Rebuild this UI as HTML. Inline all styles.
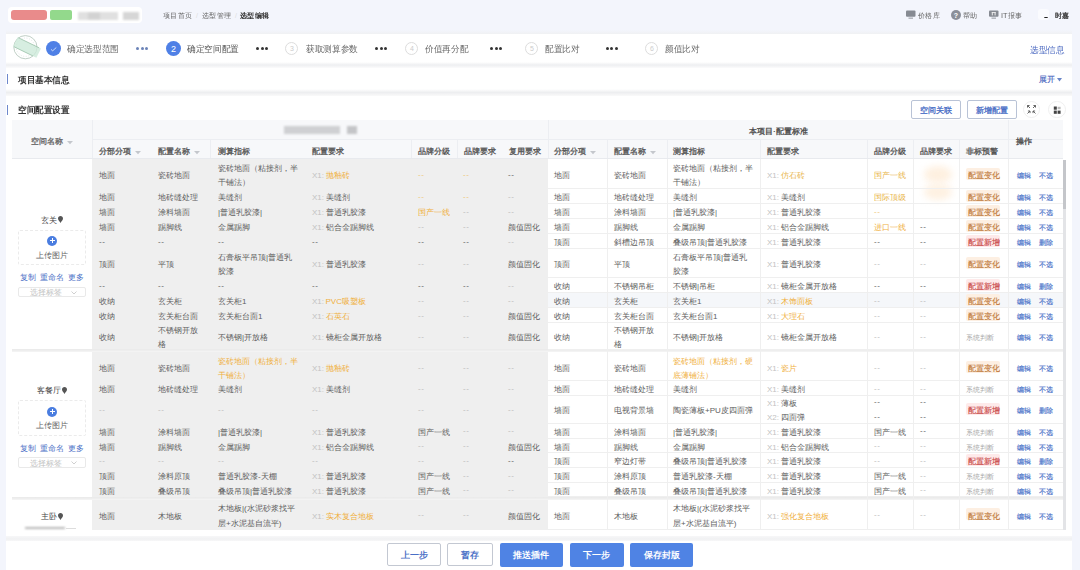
<!DOCTYPE html><html><head><meta charset="utf-8"><style>html,body{margin:0;padding:0}
body{width:1080px;height:570px;overflow:hidden;position:relative;background:#f3f5fc;font-family:"Liberation Sans", sans-serif;}
.t{position:absolute;height:20px;line-height:20px;white-space:nowrap}
.ml{position:absolute;white-space:normal}
</style></head><body><div style="position:absolute;left:8px;top:7px;width:134px;height:16px;background:#fff;border-radius:4px"></div><div style="position:absolute;left:11px;top:10px;width:36px;height:9.5px;background:#e98b8b;border-radius:3px;filter:blur(0.6px)"></div><div style="position:absolute;left:50px;top:10px;width:22px;height:9.5px;background:#93d98c;border-radius:2px;filter:blur(0.6px)"></div><div style="position:absolute;left:78px;top:11.5px;width:40px;height:8px;background:#e0e0e0;filter:blur(1.2px)"></div><div style="position:absolute;left:88px;top:13px;width:12px;height:6px;background:#d2d2d2;filter:blur(1px)"></div><div style="position:absolute;left:122.5px;top:11.5px;width:16px;height:8px;background:#d6d6d6;filter:blur(1.2px)"></div><div class="t" style="left:163px;top:6px;font-size:8px;color:#666;font-weight:normal;transform:scale(0.92);transform-origin:0 50%">项目首页</div><div class="t" style="left:196px;top:6px;font-size:7px;color:#ddd;font-weight:normal;">/</div><div class="t" style="left:202px;top:6px;font-size:8px;color:#666;font-weight:normal;transform:scale(0.92);transform-origin:0 50%">选型管理</div><div class="t" style="left:235px;top:6px;font-size:7px;color:#ddd;font-weight:normal;">/</div><div class="t" style="left:240px;top:6px;font-size:8px;color:#333;font-weight:bold;transform:scale(0.92);transform-origin:0 50%">选型编辑</div><svg style="position:absolute;left:906px;top:10px" width="10" height="10" viewBox="0 0 10 10"><rect x="0" y="0.6" width="9.5" height="6.2" rx="1" fill="#868a92"/><rect x="2.5" y="7.6" width="4.5" height="1.1" fill="#9a9ea6"/></svg><div class="t" style="left:917.5px;top:6px;font-size:8px;color:#666;font-weight:normal;transform:scale(0.92);transform-origin:0 50%">价格库</div><svg style="position:absolute;left:951px;top:10.3px" width="10" height="10" viewBox="0 0 10 10"><circle cx="5" cy="5" r="5" fill="#8a8f99"/><text x="5" y="8" font-size="7" text-anchor="middle" fill="#fff" font-family="Liberation Sans" font-weight="bold">?</text></svg><div class="t" style="left:963px;top:6px;font-size:8px;color:#666;font-weight:normal;transform:scale(0.92);transform-origin:0 50%">帮助</div><svg style="position:absolute;left:989px;top:10px" width="10" height="10" viewBox="0 0 10 10"><rect x="0" y="0.6" width="9.5" height="6.2" rx="1" fill="#868a92"/><rect x="2.8" y="2" width="1" height="3.4" fill="#eee"/><rect x="5.6" y="2" width="1" height="3.4" fill="#eee"/><rect x="2.8" y="2" width="3.8" height="0.9" fill="#eee"/><rect x="2.5" y="7.6" width="4.5" height="1.1" fill="#9a9ea6"/></svg><div class="t" style="left:1001px;top:6px;font-size:8px;color:#666;font-weight:normal;transform:scale(0.92);transform-origin:0 50%">IT报事</div><div style="position:absolute;left:1038px;top:9px;width:10.5px;height:10.5px;background:#fafbfe;border-radius:3px"></div><div style="position:absolute;left:1043.5px;top:16.6px;width:4px;height:1.6px;background:#222;border-radius:50%;filter:blur(0.3px)"></div><div class="t" style="left:1055px;top:6px;font-size:8px;color:#333;font-weight:normal;-webkit-text-stroke:0.3px #333;transform:scale(0.92);transform-origin:0 50%">时嘉</div><div style="position:absolute;left:6px;top:29.5px;width:1066px;height:4px;background:linear-gradient(rgba(238,239,242,0),#f0f1f3)"></div><div style="position:absolute;left:6px;top:33.5px;width:1066px;height:29px;background:#fff"></div><svg style="position:absolute;left:8px;top:33px;filter:blur(0.35px)" width="36" height="30" viewBox="0 0 36 30">
<circle cx="17.4" cy="14.2" r="11.6" fill="none" stroke="#b9c9bf" stroke-width="0.9"/>
<circle cx="17.4" cy="14.2" r="9.2" fill="none" stroke="#cdd9d1" stroke-width="0.6" stroke-dasharray="1 1.6"/>
<g transform="translate(19 14.5) rotate(26)">
<rect x="-13" y="-5.2" width="26" height="10.4" fill="#cdeada" opacity="0.8"/>
<line x1="-12" y1="-5" x2="11" y2="-5" stroke="#8fb89e" stroke-width="0.6"/>
<line x1="-12" y1="5" x2="9" y2="5" stroke="#8fb89e" stroke-width="0.6"/>
</g>
</svg><div style="position:absolute;left:45.9px;top:40.8px;width:14.8px;height:14.8px;background:#4f80e6;border-radius:50%"></div><svg style="position:absolute;left:45.9px;top:40.8px" width="14.8" height="14.8" viewBox="0 0 14.8 14.8"><path d="M5 8.4 L6.7 9.8 L10.3 6.5" fill="none" stroke="#d8e4fb" stroke-width="0.9"/></svg><div class="t" style="left:67px;top:38.5px;font-size:9px;color:#666;font-weight:normal;transform:scaleX(0.96);transform-origin:0 50%">确定选型范围</div><div style="position:absolute;left:136.0px;top:46.5px;width:3.2px;height:3.2px;background:#6b83b8;border-radius:50%"></div><div style="position:absolute;left:140.6px;top:46.5px;width:3.2px;height:3.2px;background:#6b83b8;border-radius:50%"></div><div style="position:absolute;left:145.2px;top:46.5px;width:3.2px;height:3.2px;background:#6b83b8;border-radius:50%"></div><div style="position:absolute;left:165.8px;top:40.7px;width:15px;height:15px;background:#4f80e6;border-radius:50%"></div><div class="t" style="left:166px;top:38.5px;width:15px;text-align:center;font-size:9px;color:#fff">2</div><div class="t" style="left:186.5px;top:38.5px;font-size:9px;color:#555;font-weight:normal;transform:scaleX(0.96);transform-origin:0 50%">确定空间配置</div><div style="position:absolute;left:256.0px;top:46.5px;width:3.2px;height:3.2px;background:#333;border-radius:50%"></div><div style="position:absolute;left:260.6px;top:46.5px;width:3.2px;height:3.2px;background:#333;border-radius:50%"></div><div style="position:absolute;left:265.2px;top:46.5px;width:3.2px;height:3.2px;background:#333;border-radius:50%"></div><div style="position:absolute;left:285px;top:41.5px;width:13px;height:13px;border:1px solid #ddd;border-radius:50%;box-sizing:border-box"></div><div class="t" style="left:285px;top:38.5px;width:14px;text-align:center;font-size:7px;color:#ccc">3</div><div class="t" style="left:306px;top:38.5px;font-size:9px;color:#666;font-weight:normal;transform:scaleX(0.96);transform-origin:0 50%">获取测算参数</div><div style="position:absolute;left:375.0px;top:46.5px;width:3.2px;height:3.2px;background:#333;border-radius:50%"></div><div style="position:absolute;left:379.6px;top:46.5px;width:3.2px;height:3.2px;background:#333;border-radius:50%"></div><div style="position:absolute;left:384.2px;top:46.5px;width:3.2px;height:3.2px;background:#333;border-radius:50%"></div><div style="position:absolute;left:405px;top:41.5px;width:13px;height:13px;border:1px solid #ddd;border-radius:50%;box-sizing:border-box"></div><div class="t" style="left:405px;top:38.5px;width:14px;text-align:center;font-size:7px;color:#ccc">4</div><div class="t" style="left:425px;top:38.5px;font-size:9px;color:#666;font-weight:normal;transform:scaleX(0.96);transform-origin:0 50%">价值再分配</div><div style="position:absolute;left:490.0px;top:46.5px;width:3.2px;height:3.2px;background:#333;border-radius:50%"></div><div style="position:absolute;left:494.6px;top:46.5px;width:3.2px;height:3.2px;background:#333;border-radius:50%"></div><div style="position:absolute;left:499.2px;top:46.5px;width:3.2px;height:3.2px;background:#333;border-radius:50%"></div><div style="position:absolute;left:525px;top:41.5px;width:13px;height:13px;border:1px solid #ddd;border-radius:50%;box-sizing:border-box"></div><div class="t" style="left:525px;top:38.5px;width:14px;text-align:center;font-size:7px;color:#ccc">5</div><div class="t" style="left:545px;top:38.5px;font-size:9px;color:#666;font-weight:normal;transform:scaleX(0.96);transform-origin:0 50%">配置比对</div><div style="position:absolute;left:605.5px;top:46.5px;width:3.2px;height:3.2px;background:#333;border-radius:50%"></div><div style="position:absolute;left:610.1px;top:46.5px;width:3.2px;height:3.2px;background:#333;border-radius:50%"></div><div style="position:absolute;left:614.7px;top:46.5px;width:3.2px;height:3.2px;background:#333;border-radius:50%"></div><div style="position:absolute;left:645px;top:41.5px;width:13px;height:13px;border:1px solid #ddd;border-radius:50%;box-sizing:border-box"></div><div class="t" style="left:645px;top:38.5px;width:14px;text-align:center;font-size:7px;color:#ccc">6</div><div class="t" style="left:665px;top:38.5px;font-size:9px;color:#666;font-weight:normal;transform:scaleX(0.96);transform-origin:0 50%">颜值比对</div><div class="t" style="left:1030px;top:39.5px;font-size:9px;color:#4a68c0;font-weight:normal;transform:scaleX(0.955);transform-origin:0 50%">选型信息</div><div style="position:absolute;left:6px;top:62px;width:1066px;height:6px;background:linear-gradient(#fff,#eeeff1 50%,#fbfbfc)"></div><div style="position:absolute;left:6px;top:67.5px;width:1066px;height:21.5px;background:#fff"></div><div style="position:absolute;left:6px;top:88.5px;width:1066px;height:7px;background:linear-gradient(#fff,#edeef0 50%,#fafafa)"></div><div style="position:absolute;left:7px;top:73.5px;width:1.4px;height:10.5px;background:#6d87cc"></div><div class="t" style="left:18px;top:69.5px;font-size:9px;color:#333;font-weight:bold;transform:scaleX(0.955);transform-origin:0 50%">项目基本信息</div><div class="t" style="left:1039px;top:69.5px;font-size:8px;color:#4a68c0;font-weight:normal;-webkit-text-stroke:0.15px #4a68c0">展开</div><svg style="position:absolute;left:1057px;top:77.5px" width="5" height="4" viewBox="0 0 5 4"><path d="M0 0 L5 0 L2.5 3.5 Z" fill="#6a86c8"/></svg><div style="position:absolute;left:6px;top:95.5px;width:1066px;height:441px;background:#fff"></div><div style="position:absolute;left:7px;top:104.5px;width:1.4px;height:10px;background:#6d87cc"></div><div class="t" style="left:18px;top:100px;font-size:9px;color:#333;font-weight:bold;transform:scaleX(0.955);transform-origin:0 50%">空间配置设置</div><div style="position:absolute;left:911px;top:100px;width:50px;height:18.5px;border:1px solid #b9c3d6;border-radius:2px;box-sizing:border-box;background:#fff"></div><div class="t" style="left:911px;top:100.55px;width:50px;text-align:center;font-size:8px;color:#4a6fc6;-webkit-text-stroke:0.3px #4a6fc6">空间关联</div><div style="position:absolute;left:967px;top:100px;width:49.5px;height:18.5px;border:1px solid #b9c3d6;border-radius:2px;box-sizing:border-box;background:#fff"></div><div class="t" style="left:967px;top:100.55px;width:49.5px;text-align:center;font-size:8px;color:#4a6fc6;-webkit-text-stroke:0.3px #4a6fc6">新增配置</div><div style="position:absolute;left:1022.8px;top:100.6px;width:17.4px;height:17.4px;border-radius:50%;border:1px solid #f0f0f0;box-sizing:border-box"></div><svg style="position:absolute;left:1026px;top:104px" width="11" height="11" viewBox="0 0 11 11" fill="none" stroke="#555" stroke-width="0.9"><path d="M1.5 1.5 L4 4 M1.5 3.6 V1.5 H3.6 M9.5 1.5 L7 4 M7.4 1.5 H9.5 V3.6 M1.5 9.5 L4 7 M1.9 7 H4 V9.1 M9.5 9.5 L7 7 M7 9.1 V7 H9.1"/></svg><div style="position:absolute;left:1048.3px;top:100.6px;width:17.4px;height:17.4px;border-radius:50%;border:1px solid #f0f0f0;box-sizing:border-box"></div><svg style="position:absolute;left:1052.5px;top:105.5px" width="9" height="9" viewBox="0 0 9 9"><rect x="0.8" y="0.5" width="3" height="3.2" fill="#444"/><rect x="4.6" y="0.8" width="3" height="2.4" fill="#bbb"/><rect x="0.8" y="4.6" width="3" height="3.2" fill="#444"/><rect x="4.6" y="4.6" width="3" height="3.2" fill="#444"/></svg><div style="position:absolute;left:12px;top:120px;width:1051px;height:39px;background:#f7f8fa"></div><div style="position:absolute;left:92px;top:120px;width:1px;height:39px;background:#eceef2"></div><div style="position:absolute;left:92px;top:139px;width:971px;height:1px;background:#eceef2"></div><div style="position:absolute;left:548px;top:120px;width:1px;height:39px;background:#eceef2"></div><div style="position:absolute;left:1008px;top:120px;width:1px;height:39px;background:#eceef2"></div><div style="position:absolute;left:210px;top:139px;width:1px;height:20px;background:#eceef2"></div><div style="position:absolute;left:411px;top:139px;width:1px;height:20px;background:#eceef2"></div><div style="position:absolute;left:457px;top:139px;width:1px;height:20px;background:#eceef2"></div><div style="position:absolute;left:607px;top:139px;width:1px;height:20px;background:#eceef2"></div><div style="position:absolute;left:667px;top:139px;width:1px;height:20px;background:#eceef2"></div><div style="position:absolute;left:760px;top:139px;width:1px;height:20px;background:#eceef2"></div><div style="position:absolute;left:867px;top:139px;width:1px;height:20px;background:#eceef2"></div><div style="position:absolute;left:913px;top:139px;width:1px;height:20px;background:#eceef2"></div><div style="position:absolute;left:959px;top:139px;width:1px;height:20px;background:#eceef2"></div><div style="position:absolute;left:12px;top:158px;width:1051px;height:1px;background:#e8eaee"></div><div class="t" style="left:31px;top:132px;font-size:8px;color:#666;font-weight:normal;-webkit-text-stroke:0.3px #666;">空间名称</div><svg style="position:absolute;left:67px;top:141px" width="6" height="4" viewBox="0 0 6 4"><path d="M0 0 L6 0 L3 3.2 Z" fill="#c4c7cc"/></svg><div style="position:absolute;left:284px;top:126px;width:56px;height:8px;background:#cfd0d3;filter:blur(1.3px)"></div><div style="position:absolute;left:347px;top:126px;width:10px;height:8px;background:#c4c5c8;filter:blur(1.3px)"></div><div class="t" style="left:749px;top:122.4px;font-size:7.6px;color:#4a4a4a;font-weight:normal;-webkit-text-stroke:0.3px #4a4a4a;">本项目·配置标准</div><div class="t" style="left:1015.5px;top:132.2px;font-size:8px;color:#4a4a4a;font-weight:normal;-webkit-text-stroke:0.3px #4a4a4a;">操作</div><div class="t" style="left:99px;top:142px;font-size:8px;color:#555;font-weight:normal;-webkit-text-stroke:0.3px #555;">分部分项</div><svg style="position:absolute;left:135px;top:151px" width="6" height="4" viewBox="0 0 6 4"><path d="M0 0 L6 0 L3 3.2 Z" fill="#c4c7cc"/></svg><div class="t" style="left:158px;top:142px;font-size:8px;color:#555;font-weight:normal;-webkit-text-stroke:0.3px #555;">配置名称</div><svg style="position:absolute;left:194px;top:151px" width="6" height="4" viewBox="0 0 6 4"><path d="M0 0 L6 0 L3 3.2 Z" fill="#c4c7cc"/></svg><div class="t" style="left:218px;top:142px;font-size:8px;color:#555;font-weight:normal;-webkit-text-stroke:0.3px #555;">测算指标</div><div class="t" style="left:312px;top:142px;font-size:8px;color:#555;font-weight:normal;-webkit-text-stroke:0.3px #555;">配置要求</div><div class="t" style="left:418px;top:142px;font-size:8px;color:#555;font-weight:normal;-webkit-text-stroke:0.3px #555;">品牌分级</div><div class="t" style="left:464px;top:142px;font-size:8px;color:#555;font-weight:normal;-webkit-text-stroke:0.3px #555;">品牌要求</div><div class="t" style="left:509px;top:142px;font-size:8px;color:#555;font-weight:normal;-webkit-text-stroke:0.3px #555;">复用要求</div><div class="t" style="left:554px;top:142px;font-size:8px;color:#555;font-weight:normal;-webkit-text-stroke:0.3px #555;">分部分项</div><svg style="position:absolute;left:590px;top:151px" width="6" height="4" viewBox="0 0 6 4"><path d="M0 0 L6 0 L3 3.2 Z" fill="#c4c7cc"/></svg><div class="t" style="left:613.5px;top:142px;font-size:8px;color:#555;font-weight:normal;-webkit-text-stroke:0.3px #555;">配置名称</div><svg style="position:absolute;left:649.5px;top:151px" width="6" height="4" viewBox="0 0 6 4"><path d="M0 0 L6 0 L3 3.2 Z" fill="#c4c7cc"/></svg><div class="t" style="left:673px;top:142px;font-size:8px;color:#555;font-weight:normal;-webkit-text-stroke:0.3px #555;">测算指标</div><div class="t" style="left:767px;top:142px;font-size:8px;color:#555;font-weight:normal;-webkit-text-stroke:0.3px #555;">配置要求</div><div class="t" style="left:874px;top:142px;font-size:8px;color:#555;font-weight:normal;-webkit-text-stroke:0.3px #555;">品牌分级</div><div class="t" style="left:920px;top:142px;font-size:8px;color:#555;font-weight:normal;-webkit-text-stroke:0.3px #555;">品牌要求</div><div class="t" style="left:966px;top:142px;font-size:8px;color:#555;font-weight:normal;-webkit-text-stroke:0.3px #555;">非标预警</div><div style="position:absolute;left:92px;top:159px;width:456px;height:370.5px;background:#efefef"></div><div style="position:absolute;left:548px;top:159px;width:515px;height:370.5px;background:#fff"></div><div style="position:absolute;left:548px;top:292px;width:515px;height:15px;background:#f5f7fa"></div><div style="position:absolute;left:924px;top:166px;width:28px;height:17px;background:#fef0e0;border-radius:50%;filter:blur(3.5px)"></div><div style="position:absolute;left:924px;top:184px;width:28px;height:16px;background:#fef1e2;border-radius:50%;filter:blur(3.5px)"></div><div style="position:absolute;left:12px;top:349.3px;width:1051px;height:3px;background:linear-gradient(#e9e9e9,#efefef 60%,#f6f6f6)"></div><div style="position:absolute;left:12px;top:496.6px;width:1051px;height:3px;background:linear-gradient(#e9e9e9,#efefef 60%,#f6f6f6)"></div><div style="position:absolute;left:548px;top:188.0px;width:515px;height:1px;background:#efefef"></div><div style="position:absolute;left:548px;top:202.5px;width:515px;height:1px;background:#efefef"></div><div style="position:absolute;left:548px;top:217.5px;width:515px;height:1px;background:#efefef"></div><div style="position:absolute;left:548px;top:232.5px;width:515px;height:1px;background:#efefef"></div><div style="position:absolute;left:548px;top:248.0px;width:515px;height:1px;background:#efefef"></div><div style="position:absolute;left:548px;top:276.5px;width:515px;height:1px;background:#efefef"></div><div style="position:absolute;left:548px;top:291.5px;width:515px;height:1px;background:#efefef"></div><div style="position:absolute;left:548px;top:306.5px;width:515px;height:1px;background:#efefef"></div><div style="position:absolute;left:548px;top:322.0px;width:515px;height:1px;background:#efefef"></div><div style="position:absolute;left:548px;top:348.5px;width:515px;height:1px;background:#efefef"></div><div style="position:absolute;left:548px;top:380.2px;width:515px;height:1px;background:#efefef"></div><div style="position:absolute;left:548px;top:395.0px;width:515px;height:1px;background:#efefef"></div><div style="position:absolute;left:548px;top:423.0px;width:515px;height:1px;background:#efefef"></div><div style="position:absolute;left:548px;top:437.5px;width:515px;height:1px;background:#efefef"></div><div style="position:absolute;left:548px;top:452.3px;width:515px;height:1px;background:#efefef"></div><div style="position:absolute;left:548px;top:467.0px;width:515px;height:1px;background:#efefef"></div><div style="position:absolute;left:548px;top:481.5px;width:515px;height:1px;background:#efefef"></div><div style="position:absolute;left:548px;top:496.1px;width:515px;height:1px;background:#efefef"></div><div style="position:absolute;left:548px;top:529.0px;width:515px;height:1px;background:#efefef"></div><div style="position:absolute;left:607px;top:159px;width:1px;height:370.5px;background:#efefef"></div><div style="position:absolute;left:667px;top:159px;width:1px;height:370.5px;background:#efefef"></div><div style="position:absolute;left:760px;top:159px;width:1px;height:370.5px;background:#efefef"></div><div style="position:absolute;left:867px;top:159px;width:1px;height:370.5px;background:#efefef"></div><div style="position:absolute;left:913px;top:159px;width:1px;height:370.5px;background:#efefef"></div><div style="position:absolute;left:959px;top:159px;width:1px;height:370.5px;background:#efefef"></div><div style="position:absolute;left:1008px;top:159px;width:1px;height:370.5px;background:#efefef"></div><div style="position:absolute;left:99px;top:169.45px;line-height:14.6px;font-size:8px;color:#5e5e5e;white-space:nowrap">地面</div><div style="position:absolute;left:158px;top:169.45px;line-height:14.6px;font-size:8px;color:#5e5e5e;white-space:nowrap">瓷砖地面</div><div style="position:absolute;left:218px;top:161.75px;line-height:14.6px;font-size:8px;color:#5e5e5e;white-space:nowrap">瓷砖地面（粘接剂，半<br>干铺法）</div><div style="position:absolute;left:312px;top:169.45px;line-height:14.6px;font-size:8px;color:#5e5e5e;white-space:nowrap"><span style="color:#c2c2c2;margin-right:1.5px">X1:</span><span style="color:#f0b040">抛釉砖</span></div><div style="position:absolute;left:418px;top:169.45px;line-height:14.6px;font-size:8px;color:#5e5e5e;white-space:nowrap"><span style="color:#eec677;position:relative;top:-1.6px;letter-spacing:0.6px">--</span></div><div style="position:absolute;left:463px;top:169.45px;line-height:14.6px;font-size:8px;color:#5e5e5e;white-space:nowrap"><span style="color:#eec677;position:relative;top:-1.6px;letter-spacing:0.6px">--</span></div><div style="position:absolute;left:508px;top:169.45px;line-height:14.6px;font-size:8px;color:#5e5e5e;white-space:nowrap"><span style="position:relative;top:-1.6px;letter-spacing:0.6px">--</span></div><div style="position:absolute;left:554px;top:169.45px;line-height:14.6px;font-size:8px;color:#5e5e5e;white-space:nowrap">地面</div><div style="position:absolute;left:613.5px;top:169.45px;line-height:14.6px;font-size:8px;color:#5e5e5e;white-space:nowrap">瓷砖地面</div><div style="position:absolute;left:673px;top:161.75px;line-height:14.6px;font-size:8px;color:#5e5e5e;white-space:nowrap">瓷砖地面（粘接剂，半<br>干铺法）</div><div style="position:absolute;left:767px;top:169.45px;line-height:14.6px;font-size:8px;color:#5e5e5e;white-space:nowrap"><span style="color:#c2c2c2;margin-right:1.5px">X1:</span><span style="color:#e9b64c">仿石砖</span></div><div style="position:absolute;left:874px;top:169.45px;line-height:14.6px;font-size:8px;color:#5e5e5e;white-space:nowrap"><span style="color:#e9b64c">国产一线</span></div><div style="position:absolute;left:920px;top:169.45px;line-height:14.6px;font-size:8px;color:#5e5e5e;white-space:nowrap"></div><div style="position:absolute;left:966px;top:168.05px;width:34px;height:12px;background:#fdefe2;border-radius:2px"></div><div style="position:absolute;left:968px;top:169.45px;line-height:14.6px;font-size:7.5px;color:#c07a3c;white-space:nowrap"><span style="-webkit-text-stroke:0.15px #c07a3c">配置变化</span></div><div style="position:absolute;left:1016.5px;top:169.45px;line-height:14.6px;font-size:7.3px;color:#4670c8;white-space:nowrap"><span style="-webkit-text-stroke:0.15px #4670c8">编辑</span></div><div style="position:absolute;left:1038.5px;top:169.45px;line-height:14.6px;font-size:7.3px;color:#4670c8;white-space:nowrap"><span style="-webkit-text-stroke:0.15px #4670c8">不选</span></div><div style="position:absolute;left:99px;top:191.45px;line-height:14.6px;font-size:8px;color:#5e5e5e;white-space:nowrap">地面</div><div style="position:absolute;left:158px;top:191.45px;line-height:14.6px;font-size:8px;color:#5e5e5e;white-space:nowrap">地砖缝处理</div><div style="position:absolute;left:218px;top:191.45px;line-height:14.6px;font-size:8px;color:#5e5e5e;white-space:nowrap">美缝剂</div><div style="position:absolute;left:312px;top:191.45px;line-height:14.6px;font-size:8px;color:#5e5e5e;white-space:nowrap"><span style="color:#c2c2c2;margin-right:1.5px">X1:</span><span style="color:#5e5e5e">美缝剂</span></div><div style="position:absolute;left:418px;top:191.45px;line-height:14.6px;font-size:8px;color:#5e5e5e;white-space:nowrap"><span style="color:#eec677;position:relative;top:-1.6px;letter-spacing:0.6px">--</span></div><div style="position:absolute;left:463px;top:191.45px;line-height:14.6px;font-size:8px;color:#5e5e5e;white-space:nowrap"><span style="color:#eec677;position:relative;top:-1.6px;letter-spacing:0.6px">--</span></div><div style="position:absolute;left:508px;top:191.45px;line-height:14.6px;font-size:8px;color:#5e5e5e;white-space:nowrap"><span style="color:#bbb;position:relative;top:-1.6px;letter-spacing:0.6px">--</span></div><div style="position:absolute;left:554px;top:191.45px;line-height:14.6px;font-size:8px;color:#5e5e5e;white-space:nowrap">地面</div><div style="position:absolute;left:613.5px;top:191.45px;line-height:14.6px;font-size:8px;color:#5e5e5e;white-space:nowrap">地砖缝处理</div><div style="position:absolute;left:673px;top:191.45px;line-height:14.6px;font-size:8px;color:#5e5e5e;white-space:nowrap">美缝剂</div><div style="position:absolute;left:767px;top:191.45px;line-height:14.6px;font-size:8px;color:#5e5e5e;white-space:nowrap"><span style="color:#c2c2c2;margin-right:1.5px">X1:</span><span style="color:#5e5e5e">美缝剂</span></div><div style="position:absolute;left:874px;top:191.45px;line-height:14.6px;font-size:8px;color:#5e5e5e;white-space:nowrap"><span style="color:#e9b64c">国际顶级</span></div><div style="position:absolute;left:920px;top:191.45px;line-height:14.6px;font-size:8px;color:#5e5e5e;white-space:nowrap"></div><div style="position:absolute;left:966px;top:190.05px;width:34px;height:12px;background:#fdefe2;border-radius:2px"></div><div style="position:absolute;left:968px;top:191.45px;line-height:14.6px;font-size:7.5px;color:#c07a3c;white-space:nowrap"><span style="-webkit-text-stroke:0.15px #c07a3c">配置变化</span></div><div style="position:absolute;left:1016.5px;top:191.45px;line-height:14.6px;font-size:7.3px;color:#4670c8;white-space:nowrap"><span style="-webkit-text-stroke:0.15px #4670c8">编辑</span></div><div style="position:absolute;left:1038.5px;top:191.45px;line-height:14.6px;font-size:7.3px;color:#4670c8;white-space:nowrap"><span style="-webkit-text-stroke:0.15px #4670c8">不选</span></div><div style="position:absolute;left:99px;top:206.2px;line-height:14.6px;font-size:8px;color:#5e5e5e;white-space:nowrap">墙面</div><div style="position:absolute;left:158px;top:206.2px;line-height:14.6px;font-size:8px;color:#5e5e5e;white-space:nowrap">涂料墙面</div><div style="position:absolute;left:218px;top:206.2px;line-height:14.6px;font-size:8px;color:#5e5e5e;white-space:nowrap">|普通乳胶漆|</div><div style="position:absolute;left:312px;top:206.2px;line-height:14.6px;font-size:8px;color:#5e5e5e;white-space:nowrap"><span style="color:#c2c2c2;margin-right:1.5px">X1:</span><span style="color:#5e5e5e">普通乳胶漆</span></div><div style="position:absolute;left:418px;top:206.2px;line-height:14.6px;font-size:8px;color:#5e5e5e;white-space:nowrap"><span style="color:#f0b040">国产一线</span></div><div style="position:absolute;left:463px;top:206.2px;line-height:14.6px;font-size:8px;color:#5e5e5e;white-space:nowrap"><span style="color:#bbb;position:relative;top:-1.6px;letter-spacing:0.6px">--</span></div><div style="position:absolute;left:508px;top:206.2px;line-height:14.6px;font-size:8px;color:#5e5e5e;white-space:nowrap"><span style="color:#bbb;position:relative;top:-1.6px;letter-spacing:0.6px">--</span></div><div style="position:absolute;left:554px;top:206.2px;line-height:14.6px;font-size:8px;color:#5e5e5e;white-space:nowrap">墙面</div><div style="position:absolute;left:613.5px;top:206.2px;line-height:14.6px;font-size:8px;color:#5e5e5e;white-space:nowrap">涂料墙面</div><div style="position:absolute;left:673px;top:206.2px;line-height:14.6px;font-size:8px;color:#5e5e5e;white-space:nowrap">|普通乳胶漆|</div><div style="position:absolute;left:767px;top:206.2px;line-height:14.6px;font-size:8px;color:#5e5e5e;white-space:nowrap"><span style="color:#c2c2c2;margin-right:1.5px">X1:</span><span style="color:#5e5e5e">普通乳胶漆</span></div><div style="position:absolute;left:874px;top:206.2px;line-height:14.6px;font-size:8px;color:#5e5e5e;white-space:nowrap"><span style="color:#eec677;position:relative;top:-1.6px;letter-spacing:0.6px">--</span></div><div style="position:absolute;left:920px;top:206.2px;line-height:14.6px;font-size:8px;color:#5e5e5e;white-space:nowrap"></div><div style="position:absolute;left:966px;top:204.8px;width:34px;height:12px;background:#fdefe2;border-radius:2px"></div><div style="position:absolute;left:968px;top:206.2px;line-height:14.6px;font-size:7.5px;color:#c07a3c;white-space:nowrap"><span style="-webkit-text-stroke:0.15px #c07a3c">配置变化</span></div><div style="position:absolute;left:1016.5px;top:206.2px;line-height:14.6px;font-size:7.3px;color:#4670c8;white-space:nowrap"><span style="-webkit-text-stroke:0.15px #4670c8">编辑</span></div><div style="position:absolute;left:1038.5px;top:206.2px;line-height:14.6px;font-size:7.3px;color:#4670c8;white-space:nowrap"><span style="-webkit-text-stroke:0.15px #4670c8">不选</span></div><div style="position:absolute;left:99px;top:221.2px;line-height:14.6px;font-size:8px;color:#5e5e5e;white-space:nowrap">墙面</div><div style="position:absolute;left:158px;top:221.2px;line-height:14.6px;font-size:8px;color:#5e5e5e;white-space:nowrap">踢脚线</div><div style="position:absolute;left:218px;top:221.2px;line-height:14.6px;font-size:8px;color:#5e5e5e;white-space:nowrap">金属踢脚</div><div style="position:absolute;left:312px;top:221.2px;line-height:14.6px;font-size:8px;color:#5e5e5e;white-space:nowrap"><span style="color:#c2c2c2;margin-right:1.5px">X1:</span><span style="color:#5e5e5e">铝合金踢脚线</span></div><div style="position:absolute;left:418px;top:221.2px;line-height:14.6px;font-size:8px;color:#5e5e5e;white-space:nowrap"><span style="color:#bbb;position:relative;top:-1.6px;letter-spacing:0.6px">--</span></div><div style="position:absolute;left:463px;top:221.2px;line-height:14.6px;font-size:8px;color:#5e5e5e;white-space:nowrap"><span style="color:#bbb;position:relative;top:-1.6px;letter-spacing:0.6px">--</span></div><div style="position:absolute;left:508px;top:221.2px;line-height:14.6px;font-size:8px;color:#5e5e5e;white-space:nowrap">颜值固化</div><div style="position:absolute;left:554px;top:221.2px;line-height:14.6px;font-size:8px;color:#5e5e5e;white-space:nowrap">墙面</div><div style="position:absolute;left:613.5px;top:221.2px;line-height:14.6px;font-size:8px;color:#5e5e5e;white-space:nowrap">踢脚线</div><div style="position:absolute;left:673px;top:221.2px;line-height:14.6px;font-size:8px;color:#5e5e5e;white-space:nowrap">金属踢脚</div><div style="position:absolute;left:767px;top:221.2px;line-height:14.6px;font-size:8px;color:#5e5e5e;white-space:nowrap"><span style="color:#c2c2c2;margin-right:1.5px">X1:</span><span style="color:#5e5e5e">铝合金踢脚线</span></div><div style="position:absolute;left:874px;top:221.2px;line-height:14.6px;font-size:8px;color:#5e5e5e;white-space:nowrap"><span style="color:#f0b040">进口一线</span></div><div style="position:absolute;left:920px;top:221.2px;line-height:14.6px;font-size:8px;color:#5e5e5e;white-space:nowrap"><span style="position:relative;top:-1.6px;letter-spacing:0.6px">--</span></div><div style="position:absolute;left:966px;top:219.8px;width:34px;height:12px;background:#fdefe2;border-radius:2px"></div><div style="position:absolute;left:968px;top:221.2px;line-height:14.6px;font-size:7.5px;color:#c07a3c;white-space:nowrap"><span style="-webkit-text-stroke:0.15px #c07a3c">配置变化</span></div><div style="position:absolute;left:1016.5px;top:221.2px;line-height:14.6px;font-size:7.3px;color:#4670c8;white-space:nowrap"><span style="-webkit-text-stroke:0.15px #4670c8">编辑</span></div><div style="position:absolute;left:1038.5px;top:221.2px;line-height:14.6px;font-size:7.3px;color:#4670c8;white-space:nowrap"><span style="-webkit-text-stroke:0.15px #4670c8">不选</span></div><div style="position:absolute;left:99px;top:236.45px;line-height:14.6px;font-size:8px;color:#5e5e5e;white-space:nowrap"><span style="position:relative;top:-1.6px;letter-spacing:0.6px">--</span></div><div style="position:absolute;left:158px;top:236.45px;line-height:14.6px;font-size:8px;color:#5e5e5e;white-space:nowrap"><span style="position:relative;top:-1.6px;letter-spacing:0.6px">--</span></div><div style="position:absolute;left:218px;top:236.45px;line-height:14.6px;font-size:8px;color:#5e5e5e;white-space:nowrap"><span style="position:relative;top:-1.6px;letter-spacing:0.6px">--</span></div><div style="position:absolute;left:312px;top:236.45px;line-height:14.6px;font-size:8px;color:#5e5e5e;white-space:nowrap"><span style="position:relative;top:-1.6px;letter-spacing:0.6px">--</span></div><div style="position:absolute;left:418px;top:236.45px;line-height:14.6px;font-size:8px;color:#5e5e5e;white-space:nowrap"><span style="position:relative;top:-1.6px;letter-spacing:0.6px">--</span></div><div style="position:absolute;left:463px;top:236.45px;line-height:14.6px;font-size:8px;color:#5e5e5e;white-space:nowrap"><span style="position:relative;top:-1.6px;letter-spacing:0.6px">--</span></div><div style="position:absolute;left:508px;top:236.45px;line-height:14.6px;font-size:8px;color:#5e5e5e;white-space:nowrap"><span style="color:#bbb;position:relative;top:-1.6px;letter-spacing:0.6px">--</span></div><div style="position:absolute;left:554px;top:236.45px;line-height:14.6px;font-size:8px;color:#5e5e5e;white-space:nowrap">顶面</div><div style="position:absolute;left:613.5px;top:236.45px;line-height:14.6px;font-size:8px;color:#5e5e5e;white-space:nowrap">斜槽边吊顶</div><div style="position:absolute;left:673px;top:236.45px;line-height:14.6px;font-size:8px;color:#5e5e5e;white-space:nowrap">叠级吊顶|普通乳胶漆</div><div style="position:absolute;left:767px;top:236.45px;line-height:14.6px;font-size:8px;color:#5e5e5e;white-space:nowrap"><span style="color:#c2c2c2;margin-right:1.5px">X1:</span><span style="color:#5e5e5e">普通乳胶漆</span></div><div style="position:absolute;left:874px;top:236.45px;line-height:14.6px;font-size:8px;color:#5e5e5e;white-space:nowrap"><span style="position:relative;top:-1.6px;letter-spacing:0.6px">--</span></div><div style="position:absolute;left:920px;top:236.45px;line-height:14.6px;font-size:8px;color:#5e5e5e;white-space:nowrap"><span style="position:relative;top:-1.6px;letter-spacing:0.6px">--</span></div><div style="position:absolute;left:966px;top:235.05px;width:34px;height:12px;background:#feeaea;border-radius:2px"></div><div style="position:absolute;left:968px;top:236.45px;line-height:14.6px;font-size:7.5px;color:#c94848;white-space:nowrap"><span style="-webkit-text-stroke:0.15px #c94848">配置新增</span></div><div style="position:absolute;left:1016.5px;top:236.45px;line-height:14.6px;font-size:7.3px;color:#4670c8;white-space:nowrap"><span style="-webkit-text-stroke:0.15px #4670c8">编辑</span></div><div style="position:absolute;left:1038.5px;top:236.45px;line-height:14.6px;font-size:7.3px;color:#4670c8;white-space:nowrap"><span style="-webkit-text-stroke:0.15px #4670c8">删除</span></div><div style="position:absolute;left:99px;top:258.45px;line-height:14.6px;font-size:8px;color:#5e5e5e;white-space:nowrap">顶面</div><div style="position:absolute;left:158px;top:258.45px;line-height:14.6px;font-size:8px;color:#5e5e5e;white-space:nowrap">平顶</div><div style="position:absolute;left:218px;top:250.75000000000003px;line-height:14.6px;font-size:8px;color:#5e5e5e;white-space:nowrap">石膏板平吊顶|普通乳<br>胶漆</div><div style="position:absolute;left:312px;top:258.45px;line-height:14.6px;font-size:8px;color:#5e5e5e;white-space:nowrap"><span style="color:#c2c2c2;margin-right:1.5px">X1:</span><span style="color:#5e5e5e">普通乳胶漆</span></div><div style="position:absolute;left:418px;top:258.45px;line-height:14.6px;font-size:8px;color:#5e5e5e;white-space:nowrap"><span style="color:#bbb;position:relative;top:-1.6px;letter-spacing:0.6px">--</span></div><div style="position:absolute;left:463px;top:258.45px;line-height:14.6px;font-size:8px;color:#5e5e5e;white-space:nowrap"><span style="color:#bbb;position:relative;top:-1.6px;letter-spacing:0.6px">--</span></div><div style="position:absolute;left:508px;top:258.45px;line-height:14.6px;font-size:8px;color:#5e5e5e;white-space:nowrap">颜值固化</div><div style="position:absolute;left:554px;top:258.45px;line-height:14.6px;font-size:8px;color:#5e5e5e;white-space:nowrap">顶面</div><div style="position:absolute;left:613.5px;top:258.45px;line-height:14.6px;font-size:8px;color:#5e5e5e;white-space:nowrap">平顶</div><div style="position:absolute;left:673px;top:250.75000000000003px;line-height:14.6px;font-size:8px;color:#5e5e5e;white-space:nowrap">石膏板平吊顶|普通乳<br>胶漆</div><div style="position:absolute;left:767px;top:258.45px;line-height:14.6px;font-size:8px;color:#5e5e5e;white-space:nowrap"><span style="color:#c2c2c2;margin-right:1.5px">X1:</span><span style="color:#5e5e5e">普通乳胶漆</span></div><div style="position:absolute;left:874px;top:258.45px;line-height:14.6px;font-size:8px;color:#5e5e5e;white-space:nowrap"><span style="color:#bbb;position:relative;top:-1.6px;letter-spacing:0.6px">--</span></div><div style="position:absolute;left:920px;top:258.45px;line-height:14.6px;font-size:8px;color:#5e5e5e;white-space:nowrap"><span style="color:#bbb;position:relative;top:-1.6px;letter-spacing:0.6px">--</span></div><div style="position:absolute;left:966px;top:257.05px;width:34px;height:12px;background:#fdefe2;border-radius:2px"></div><div style="position:absolute;left:968px;top:258.45px;line-height:14.6px;font-size:7.5px;color:#c07a3c;white-space:nowrap"><span style="-webkit-text-stroke:0.15px #c07a3c">配置变化</span></div><div style="position:absolute;left:1016.5px;top:258.45px;line-height:14.6px;font-size:7.3px;color:#4670c8;white-space:nowrap"><span style="-webkit-text-stroke:0.15px #4670c8">编辑</span></div><div style="position:absolute;left:1038.5px;top:258.45px;line-height:14.6px;font-size:7.3px;color:#4670c8;white-space:nowrap"><span style="-webkit-text-stroke:0.15px #4670c8">不选</span></div><div style="position:absolute;left:99px;top:280.2px;line-height:14.6px;font-size:8px;color:#5e5e5e;white-space:nowrap"><span style="position:relative;top:-1.6px;letter-spacing:0.6px">--</span></div><div style="position:absolute;left:158px;top:280.2px;line-height:14.6px;font-size:8px;color:#5e5e5e;white-space:nowrap"><span style="position:relative;top:-1.6px;letter-spacing:0.6px">--</span></div><div style="position:absolute;left:218px;top:280.2px;line-height:14.6px;font-size:8px;color:#5e5e5e;white-space:nowrap"><span style="position:relative;top:-1.6px;letter-spacing:0.6px">--</span></div><div style="position:absolute;left:312px;top:280.2px;line-height:14.6px;font-size:8px;color:#5e5e5e;white-space:nowrap"><span style="position:relative;top:-1.6px;letter-spacing:0.6px">--</span></div><div style="position:absolute;left:418px;top:280.2px;line-height:14.6px;font-size:8px;color:#5e5e5e;white-space:nowrap"><span style="position:relative;top:-1.6px;letter-spacing:0.6px">--</span></div><div style="position:absolute;left:463px;top:280.2px;line-height:14.6px;font-size:8px;color:#5e5e5e;white-space:nowrap"><span style="position:relative;top:-1.6px;letter-spacing:0.6px">--</span></div><div style="position:absolute;left:508px;top:280.2px;line-height:14.6px;font-size:8px;color:#5e5e5e;white-space:nowrap"><span style="color:#bbb;position:relative;top:-1.6px;letter-spacing:0.6px">--</span></div><div style="position:absolute;left:554px;top:280.2px;line-height:14.6px;font-size:8px;color:#5e5e5e;white-space:nowrap">收纳</div><div style="position:absolute;left:613.5px;top:280.2px;line-height:14.6px;font-size:8px;color:#5e5e5e;white-space:nowrap">不锈钢吊柜</div><div style="position:absolute;left:673px;top:280.2px;line-height:14.6px;font-size:8px;color:#5e5e5e;white-space:nowrap">不锈钢|吊柜</div><div style="position:absolute;left:767px;top:280.2px;line-height:14.6px;font-size:8px;color:#5e5e5e;white-space:nowrap"><span style="color:#c2c2c2;margin-right:1.5px">X1:</span><span style="color:#5e5e5e">镜柜金属开放格</span></div><div style="position:absolute;left:874px;top:280.2px;line-height:14.6px;font-size:8px;color:#5e5e5e;white-space:nowrap"><span style="position:relative;top:-1.6px;letter-spacing:0.6px">--</span></div><div style="position:absolute;left:920px;top:280.2px;line-height:14.6px;font-size:8px;color:#5e5e5e;white-space:nowrap"><span style="position:relative;top:-1.6px;letter-spacing:0.6px">--</span></div><div style="position:absolute;left:966px;top:278.8px;width:34px;height:12px;background:#feeaea;border-radius:2px"></div><div style="position:absolute;left:968px;top:280.2px;line-height:14.6px;font-size:7.5px;color:#c94848;white-space:nowrap"><span style="-webkit-text-stroke:0.15px #c94848">配置新增</span></div><div style="position:absolute;left:1016.5px;top:280.2px;line-height:14.6px;font-size:7.3px;color:#4670c8;white-space:nowrap"><span style="-webkit-text-stroke:0.15px #4670c8">编辑</span></div><div style="position:absolute;left:1038.5px;top:280.2px;line-height:14.6px;font-size:7.3px;color:#4670c8;white-space:nowrap"><span style="-webkit-text-stroke:0.15px #4670c8">删除</span></div><div style="position:absolute;left:99px;top:295.2px;line-height:14.6px;font-size:8px;color:#5e5e5e;white-space:nowrap">收纳</div><div style="position:absolute;left:158px;top:295.2px;line-height:14.6px;font-size:8px;color:#5e5e5e;white-space:nowrap">玄关柜</div><div style="position:absolute;left:218px;top:295.2px;line-height:14.6px;font-size:8px;color:#5e5e5e;white-space:nowrap">玄关柜1</div><div style="position:absolute;left:312px;top:295.2px;line-height:14.6px;font-size:8px;color:#5e5e5e;white-space:nowrap"><span style="color:#c2c2c2;margin-right:1.5px">X1:</span><span style="color:#f0b040">PVC吸塑板</span></div><div style="position:absolute;left:418px;top:295.2px;line-height:14.6px;font-size:8px;color:#5e5e5e;white-space:nowrap"><span style="color:#bbb;position:relative;top:-1.6px;letter-spacing:0.6px">--</span></div><div style="position:absolute;left:463px;top:295.2px;line-height:14.6px;font-size:8px;color:#5e5e5e;white-space:nowrap"><span style="color:#bbb;position:relative;top:-1.6px;letter-spacing:0.6px">--</span></div><div style="position:absolute;left:508px;top:295.2px;line-height:14.6px;font-size:8px;color:#5e5e5e;white-space:nowrap"><span style="color:#bbb;position:relative;top:-1.6px;letter-spacing:0.6px">--</span></div><div style="position:absolute;left:554px;top:295.2px;line-height:14.6px;font-size:8px;color:#5e5e5e;white-space:nowrap">收纳</div><div style="position:absolute;left:613.5px;top:295.2px;line-height:14.6px;font-size:8px;color:#5e5e5e;white-space:nowrap">玄关柜</div><div style="position:absolute;left:673px;top:295.2px;line-height:14.6px;font-size:8px;color:#5e5e5e;white-space:nowrap">玄关柜1</div><div style="position:absolute;left:767px;top:295.2px;line-height:14.6px;font-size:8px;color:#5e5e5e;white-space:nowrap"><span style="color:#c2c2c2;margin-right:1.5px">X1:</span><span style="color:#f0b040">木饰面板</span></div><div style="position:absolute;left:874px;top:295.2px;line-height:14.6px;font-size:8px;color:#5e5e5e;white-space:nowrap"><span style="color:#bbb;position:relative;top:-1.6px;letter-spacing:0.6px">--</span></div><div style="position:absolute;left:920px;top:295.2px;line-height:14.6px;font-size:8px;color:#5e5e5e;white-space:nowrap"><span style="color:#bbb;position:relative;top:-1.6px;letter-spacing:0.6px">--</span></div><div style="position:absolute;left:966px;top:293.8px;width:34px;height:12px;background:#fdefe2;border-radius:2px"></div><div style="position:absolute;left:968px;top:295.2px;line-height:14.6px;font-size:7.5px;color:#c07a3c;white-space:nowrap"><span style="-webkit-text-stroke:0.15px #c07a3c">配置变化</span></div><div style="position:absolute;left:1016.5px;top:295.2px;line-height:14.6px;font-size:7.3px;color:#4670c8;white-space:nowrap"><span style="-webkit-text-stroke:0.15px #4670c8">编辑</span></div><div style="position:absolute;left:1038.5px;top:295.2px;line-height:14.6px;font-size:7.3px;color:#4670c8;white-space:nowrap"><span style="-webkit-text-stroke:0.15px #4670c8">不选</span></div><div style="position:absolute;left:99px;top:310.45px;line-height:14.6px;font-size:8px;color:#5e5e5e;white-space:nowrap">收纳</div><div style="position:absolute;left:158px;top:310.45px;line-height:14.6px;font-size:8px;color:#5e5e5e;white-space:nowrap">玄关柜台面</div><div style="position:absolute;left:218px;top:310.45px;line-height:14.6px;font-size:8px;color:#5e5e5e;white-space:nowrap">玄关柜台面1</div><div style="position:absolute;left:312px;top:310.45px;line-height:14.6px;font-size:8px;color:#5e5e5e;white-space:nowrap"><span style="color:#c2c2c2;margin-right:1.5px">X1:</span><span style="color:#f0b040">石英石</span></div><div style="position:absolute;left:418px;top:310.45px;line-height:14.6px;font-size:8px;color:#5e5e5e;white-space:nowrap"><span style="color:#bbb;position:relative;top:-1.6px;letter-spacing:0.6px">--</span></div><div style="position:absolute;left:463px;top:310.45px;line-height:14.6px;font-size:8px;color:#5e5e5e;white-space:nowrap"><span style="color:#bbb;position:relative;top:-1.6px;letter-spacing:0.6px">--</span></div><div style="position:absolute;left:508px;top:310.45px;line-height:14.6px;font-size:8px;color:#5e5e5e;white-space:nowrap">颜值固化</div><div style="position:absolute;left:554px;top:310.45px;line-height:14.6px;font-size:8px;color:#5e5e5e;white-space:nowrap">收纳</div><div style="position:absolute;left:613.5px;top:310.45px;line-height:14.6px;font-size:8px;color:#5e5e5e;white-space:nowrap">玄关柜台面</div><div style="position:absolute;left:673px;top:310.45px;line-height:14.6px;font-size:8px;color:#5e5e5e;white-space:nowrap">玄关柜台面1</div><div style="position:absolute;left:767px;top:310.45px;line-height:14.6px;font-size:8px;color:#5e5e5e;white-space:nowrap"><span style="color:#c2c2c2;margin-right:1.5px">X1:</span><span style="color:#f0b040">大理石</span></div><div style="position:absolute;left:874px;top:310.45px;line-height:14.6px;font-size:8px;color:#5e5e5e;white-space:nowrap"><span style="color:#bbb;position:relative;top:-1.6px;letter-spacing:0.6px">--</span></div><div style="position:absolute;left:920px;top:310.45px;line-height:14.6px;font-size:8px;color:#5e5e5e;white-space:nowrap"><span style="color:#bbb;position:relative;top:-1.6px;letter-spacing:0.6px">--</span></div><div style="position:absolute;left:966px;top:309.05px;width:34px;height:12px;background:#fdefe2;border-radius:2px"></div><div style="position:absolute;left:968px;top:310.45px;line-height:14.6px;font-size:7.5px;color:#c07a3c;white-space:nowrap"><span style="-webkit-text-stroke:0.15px #c07a3c">配置变化</span></div><div style="position:absolute;left:1016.5px;top:310.45px;line-height:14.6px;font-size:7.3px;color:#4670c8;white-space:nowrap"><span style="-webkit-text-stroke:0.15px #4670c8">编辑</span></div><div style="position:absolute;left:1038.5px;top:310.45px;line-height:14.6px;font-size:7.3px;color:#4670c8;white-space:nowrap"><span style="-webkit-text-stroke:0.15px #4670c8">不选</span></div><div style="position:absolute;left:99px;top:331.45px;line-height:14.6px;font-size:8px;color:#5e5e5e;white-space:nowrap">收纳</div><div style="position:absolute;left:158px;top:323.75px;line-height:14.6px;font-size:8px;color:#5e5e5e;white-space:nowrap">不锈钢开放<br>格</div><div style="position:absolute;left:218px;top:331.45px;line-height:14.6px;font-size:8px;color:#5e5e5e;white-space:nowrap">不锈钢|开放格</div><div style="position:absolute;left:312px;top:331.45px;line-height:14.6px;font-size:8px;color:#5e5e5e;white-space:nowrap"><span style="color:#c2c2c2;margin-right:1.5px">X1:</span><span style="color:#5e5e5e">镜柜金属开放格</span></div><div style="position:absolute;left:418px;top:331.45px;line-height:14.6px;font-size:8px;color:#5e5e5e;white-space:nowrap"><span style="color:#bbb;position:relative;top:-1.6px;letter-spacing:0.6px">--</span></div><div style="position:absolute;left:463px;top:331.45px;line-height:14.6px;font-size:8px;color:#5e5e5e;white-space:nowrap"><span style="color:#bbb;position:relative;top:-1.6px;letter-spacing:0.6px">--</span></div><div style="position:absolute;left:508px;top:331.45px;line-height:14.6px;font-size:8px;color:#5e5e5e;white-space:nowrap">颜值固化</div><div style="position:absolute;left:554px;top:331.45px;line-height:14.6px;font-size:8px;color:#5e5e5e;white-space:nowrap">收纳</div><div style="position:absolute;left:613.5px;top:323.75px;line-height:14.6px;font-size:8px;color:#5e5e5e;white-space:nowrap">不锈钢开放<br>格</div><div style="position:absolute;left:673px;top:331.45px;line-height:14.6px;font-size:8px;color:#5e5e5e;white-space:nowrap">不锈钢|开放格</div><div style="position:absolute;left:767px;top:331.45px;line-height:14.6px;font-size:8px;color:#5e5e5e;white-space:nowrap"><span style="color:#c2c2c2;margin-right:1.5px">X1:</span><span style="color:#5e5e5e">镜柜金属开放格</span></div><div style="position:absolute;left:874px;top:331.45px;line-height:14.6px;font-size:8px;color:#5e5e5e;white-space:nowrap"><span style="color:#bbb;position:relative;top:-1.6px;letter-spacing:0.6px">--</span></div><div style="position:absolute;left:920px;top:331.45px;line-height:14.6px;font-size:8px;color:#5e5e5e;white-space:nowrap"><span style="color:#bbb;position:relative;top:-1.6px;letter-spacing:0.6px">--</span></div><div style="position:absolute;left:966px;top:331.45px;line-height:14.6px;font-size:7.4px;color:#aaaaaa;white-space:nowrap">系统判断</div><div style="position:absolute;left:1016.5px;top:331.45px;line-height:14.6px;font-size:7.3px;color:#4670c8;white-space:nowrap"><span style="-webkit-text-stroke:0.15px #4670c8">编辑</span></div><div style="position:absolute;left:1038.5px;top:331.45px;line-height:14.6px;font-size:7.3px;color:#4670c8;white-space:nowrap"><span style="-webkit-text-stroke:0.15px #4670c8">不选</span></div><div style="position:absolute;left:99px;top:362.2px;line-height:14.6px;font-size:8px;color:#5e5e5e;white-space:nowrap">地面</div><div style="position:absolute;left:158px;top:362.2px;line-height:14.6px;font-size:8px;color:#5e5e5e;white-space:nowrap">瓷砖地面</div><div style="position:absolute;left:218px;top:354.5px;line-height:14.6px;font-size:8px;color:#5e5e5e;white-space:nowrap"><span style="color:#f0b040">瓷砖地面（粘接剂，半<br>干铺法）</span></div><div style="position:absolute;left:312px;top:362.2px;line-height:14.6px;font-size:8px;color:#5e5e5e;white-space:nowrap"><span style="color:#c2c2c2;margin-right:1.5px">X1:</span><span style="color:#f0b040">抛釉砖</span></div><div style="position:absolute;left:418px;top:362.2px;line-height:14.6px;font-size:8px;color:#5e5e5e;white-space:nowrap"><span style="color:#bbb;position:relative;top:-1.6px;letter-spacing:0.6px">--</span></div><div style="position:absolute;left:463px;top:362.2px;line-height:14.6px;font-size:8px;color:#5e5e5e;white-space:nowrap"><span style="color:#bbb;position:relative;top:-1.6px;letter-spacing:0.6px">--</span></div><div style="position:absolute;left:508px;top:362.2px;line-height:14.6px;font-size:8px;color:#5e5e5e;white-space:nowrap"><span style="color:#bbb;position:relative;top:-1.6px;letter-spacing:0.6px">--</span></div><div style="position:absolute;left:554px;top:362.2px;line-height:14.6px;font-size:8px;color:#5e5e5e;white-space:nowrap">地面</div><div style="position:absolute;left:613.5px;top:362.2px;line-height:14.6px;font-size:8px;color:#5e5e5e;white-space:nowrap">瓷砖地面</div><div style="position:absolute;left:673px;top:354.5px;line-height:14.6px;font-size:8px;color:#5e5e5e;white-space:nowrap"><span style="color:#f0b040">瓷砖地面（粘接剂，硬<br>底薄铺法）</span></div><div style="position:absolute;left:767px;top:362.2px;line-height:14.6px;font-size:8px;color:#5e5e5e;white-space:nowrap"><span style="color:#c2c2c2;margin-right:1.5px">X1:</span><span style="color:#f0b040">瓷片</span></div><div style="position:absolute;left:874px;top:362.2px;line-height:14.6px;font-size:8px;color:#5e5e5e;white-space:nowrap"><span style="color:#bbb;position:relative;top:-1.6px;letter-spacing:0.6px">--</span></div><div style="position:absolute;left:920px;top:362.2px;line-height:14.6px;font-size:8px;color:#5e5e5e;white-space:nowrap"><span style="color:#bbb;position:relative;top:-1.6px;letter-spacing:0.6px">--</span></div><div style="position:absolute;left:966px;top:360.8px;width:34px;height:12px;background:#fdefe2;border-radius:2px"></div><div style="position:absolute;left:968px;top:362.2px;line-height:14.6px;font-size:7.5px;color:#c07a3c;white-space:nowrap"><span style="-webkit-text-stroke:0.15px #c07a3c">配置变化</span></div><div style="position:absolute;left:1016.5px;top:362.2px;line-height:14.6px;font-size:7.3px;color:#4670c8;white-space:nowrap"><span style="-webkit-text-stroke:0.15px #4670c8">编辑</span></div><div style="position:absolute;left:1038.5px;top:362.2px;line-height:14.6px;font-size:7.3px;color:#4670c8;white-space:nowrap"><span style="-webkit-text-stroke:0.15px #4670c8">不选</span></div><div style="position:absolute;left:99px;top:383.2px;line-height:14.6px;font-size:8px;color:#5e5e5e;white-space:nowrap">地面</div><div style="position:absolute;left:158px;top:383.2px;line-height:14.6px;font-size:8px;color:#5e5e5e;white-space:nowrap">地砖缝处理</div><div style="position:absolute;left:218px;top:383.2px;line-height:14.6px;font-size:8px;color:#5e5e5e;white-space:nowrap">美缝剂</div><div style="position:absolute;left:312px;top:383.2px;line-height:14.6px;font-size:8px;color:#5e5e5e;white-space:nowrap"><span style="color:#c2c2c2;margin-right:1.5px">X1:</span><span style="color:#5e5e5e">美缝剂</span></div><div style="position:absolute;left:418px;top:383.2px;line-height:14.6px;font-size:8px;color:#5e5e5e;white-space:nowrap"><span style="color:#bbb;position:relative;top:-1.6px;letter-spacing:0.6px">--</span></div><div style="position:absolute;left:463px;top:383.2px;line-height:14.6px;font-size:8px;color:#5e5e5e;white-space:nowrap"><span style="color:#bbb;position:relative;top:-1.6px;letter-spacing:0.6px">--</span></div><div style="position:absolute;left:508px;top:383.2px;line-height:14.6px;font-size:8px;color:#5e5e5e;white-space:nowrap"><span style="color:#bbb;position:relative;top:-1.6px;letter-spacing:0.6px">--</span></div><div style="position:absolute;left:554px;top:383.2px;line-height:14.6px;font-size:8px;color:#5e5e5e;white-space:nowrap">地面</div><div style="position:absolute;left:613.5px;top:383.2px;line-height:14.6px;font-size:8px;color:#5e5e5e;white-space:nowrap">地砖缝处理</div><div style="position:absolute;left:673px;top:383.2px;line-height:14.6px;font-size:8px;color:#5e5e5e;white-space:nowrap">美缝剂</div><div style="position:absolute;left:767px;top:383.2px;line-height:14.6px;font-size:8px;color:#5e5e5e;white-space:nowrap"><span style="color:#c2c2c2;margin-right:1.5px">X1:</span><span style="color:#5e5e5e">美缝剂</span></div><div style="position:absolute;left:874px;top:383.2px;line-height:14.6px;font-size:8px;color:#5e5e5e;white-space:nowrap"><span style="color:#bbb;position:relative;top:-1.6px;letter-spacing:0.6px">--</span></div><div style="position:absolute;left:920px;top:383.2px;line-height:14.6px;font-size:8px;color:#5e5e5e;white-space:nowrap"><span style="color:#bbb;position:relative;top:-1.6px;letter-spacing:0.6px">--</span></div><div style="position:absolute;left:966px;top:383.2px;line-height:14.6px;font-size:7.4px;color:#aaaaaa;white-space:nowrap">系统判断</div><div style="position:absolute;left:1016.5px;top:383.2px;line-height:14.6px;font-size:7.3px;color:#4670c8;white-space:nowrap"><span style="-webkit-text-stroke:0.15px #4670c8">编辑</span></div><div style="position:absolute;left:1038.5px;top:383.2px;line-height:14.6px;font-size:7.3px;color:#4670c8;white-space:nowrap"><span style="-webkit-text-stroke:0.15px #4670c8">不选</span></div><div style="position:absolute;left:99px;top:404.2px;line-height:14.6px;font-size:8px;color:#5e5e5e;white-space:nowrap"><span style="color:#bbb;position:relative;top:-1.6px;letter-spacing:0.6px">--</span></div><div style="position:absolute;left:158px;top:404.2px;line-height:14.6px;font-size:8px;color:#5e5e5e;white-space:nowrap"><span style="color:#bbb;position:relative;top:-1.6px;letter-spacing:0.6px">--</span></div><div style="position:absolute;left:218px;top:404.2px;line-height:14.6px;font-size:8px;color:#5e5e5e;white-space:nowrap"><span style="color:#bbb;position:relative;top:-1.6px;letter-spacing:0.6px">--</span></div><div style="position:absolute;left:312px;top:404.2px;line-height:14.6px;font-size:8px;color:#5e5e5e;white-space:nowrap"><span style="color:#bbb;position:relative;top:-1.6px;letter-spacing:0.6px">--</span></div><div style="position:absolute;left:418px;top:404.2px;line-height:14.6px;font-size:8px;color:#5e5e5e;white-space:nowrap"><span style="color:#bbb;position:relative;top:-1.6px;letter-spacing:0.6px">--</span></div><div style="position:absolute;left:463px;top:404.2px;line-height:14.6px;font-size:8px;color:#5e5e5e;white-space:nowrap"><span style="color:#bbb;position:relative;top:-1.6px;letter-spacing:0.6px">--</span></div><div style="position:absolute;left:508px;top:404.2px;line-height:14.6px;font-size:8px;color:#5e5e5e;white-space:nowrap"><span style="color:#bbb;position:relative;top:-1.6px;letter-spacing:0.6px">--</span></div><div style="position:absolute;left:554px;top:404.2px;line-height:14.6px;font-size:8px;color:#5e5e5e;white-space:nowrap">墙面</div><div style="position:absolute;left:613.5px;top:404.2px;line-height:14.6px;font-size:8px;color:#5e5e5e;white-space:nowrap">电视背景墙</div><div style="position:absolute;left:673px;top:404.2px;line-height:14.6px;font-size:8px;color:#5e5e5e;white-space:nowrap">陶瓷薄板+PU皮四面弹</div><div style="position:absolute;left:767px;top:396.5px;line-height:14.6px;font-size:8px;color:#5e5e5e;white-space:nowrap"><span style="color:#c2c2c2;margin-right:1.5px">X1:</span><span style="color:#5e5e5e">薄板</span><br><span style="color:#c2c2c2;margin-right:1.5px">X2:</span><span style="color:#5e5e5e">四面弹</span></div><div style="position:absolute;left:874px;top:396.5px;line-height:14.6px;font-size:8px;color:#5e5e5e;white-space:nowrap"><span style="position:relative;top:-1.6px;letter-spacing:0.6px">--</span><br><span style="position:relative;top:-1.6px;letter-spacing:0.6px">--</span></div><div style="position:absolute;left:920px;top:396.5px;line-height:14.6px;font-size:8px;color:#5e5e5e;white-space:nowrap"><span style="position:relative;top:-1.6px;letter-spacing:0.6px">--</span><br><span style="position:relative;top:-1.6px;letter-spacing:0.6px">--</span></div><div style="position:absolute;left:966px;top:402.8px;width:34px;height:12px;background:#feeaea;border-radius:2px"></div><div style="position:absolute;left:968px;top:404.2px;line-height:14.6px;font-size:7.5px;color:#c94848;white-space:nowrap"><span style="-webkit-text-stroke:0.15px #c94848">配置新增</span></div><div style="position:absolute;left:1016.5px;top:404.2px;line-height:14.6px;font-size:7.3px;color:#4670c8;white-space:nowrap"><span style="-webkit-text-stroke:0.15px #4670c8">编辑</span></div><div style="position:absolute;left:1038.5px;top:404.2px;line-height:14.6px;font-size:7.3px;color:#4670c8;white-space:nowrap"><span style="-webkit-text-stroke:0.15px #4670c8">删除</span></div><div style="position:absolute;left:99px;top:425.65px;line-height:14.6px;font-size:8px;color:#5e5e5e;white-space:nowrap">墙面</div><div style="position:absolute;left:158px;top:425.65px;line-height:14.6px;font-size:8px;color:#5e5e5e;white-space:nowrap">涂料墙面</div><div style="position:absolute;left:218px;top:425.65px;line-height:14.6px;font-size:8px;color:#5e5e5e;white-space:nowrap">|普通乳胶漆|</div><div style="position:absolute;left:312px;top:425.65px;line-height:14.6px;font-size:8px;color:#5e5e5e;white-space:nowrap"><span style="color:#c2c2c2;margin-right:1.5px">X1:</span><span style="color:#5e5e5e">普通乳胶漆</span></div><div style="position:absolute;left:418px;top:425.65px;line-height:14.6px;font-size:8px;color:#5e5e5e;white-space:nowrap">国产一线</div><div style="position:absolute;left:463px;top:425.65px;line-height:14.6px;font-size:8px;color:#5e5e5e;white-space:nowrap"><span style="color:#bbb;position:relative;top:-1.6px;letter-spacing:0.6px">--</span></div><div style="position:absolute;left:508px;top:425.65px;line-height:14.6px;font-size:8px;color:#5e5e5e;white-space:nowrap"><span style="color:#bbb;position:relative;top:-1.6px;letter-spacing:0.6px">--</span></div><div style="position:absolute;left:554px;top:425.65px;line-height:14.6px;font-size:8px;color:#5e5e5e;white-space:nowrap">墙面</div><div style="position:absolute;left:613.5px;top:425.65px;line-height:14.6px;font-size:8px;color:#5e5e5e;white-space:nowrap">涂料墙面</div><div style="position:absolute;left:673px;top:425.65px;line-height:14.6px;font-size:8px;color:#5e5e5e;white-space:nowrap">|普通乳胶漆|</div><div style="position:absolute;left:767px;top:425.65px;line-height:14.6px;font-size:8px;color:#5e5e5e;white-space:nowrap"><span style="color:#c2c2c2;margin-right:1.5px">X1:</span><span style="color:#5e5e5e">普通乳胶漆</span></div><div style="position:absolute;left:874px;top:425.65px;line-height:14.6px;font-size:8px;color:#5e5e5e;white-space:nowrap">国产一线</div><div style="position:absolute;left:920px;top:425.65px;line-height:14.6px;font-size:8px;color:#5e5e5e;white-space:nowrap"><span style="position:relative;top:-1.6px;letter-spacing:0.6px">--</span></div><div style="position:absolute;left:966px;top:425.65px;line-height:14.6px;font-size:7.4px;color:#aaaaaa;white-space:nowrap">系统判断</div><div style="position:absolute;left:1016.5px;top:425.65px;line-height:14.6px;font-size:7.3px;color:#4670c8;white-space:nowrap"><span style="-webkit-text-stroke:0.15px #4670c8">编辑</span></div><div style="position:absolute;left:1038.5px;top:425.65px;line-height:14.6px;font-size:7.3px;color:#4670c8;white-space:nowrap"><span style="-webkit-text-stroke:0.15px #4670c8">不选</span></div><div style="position:absolute;left:99px;top:440.59999999999997px;line-height:14.6px;font-size:8px;color:#5e5e5e;white-space:nowrap">墙面</div><div style="position:absolute;left:158px;top:440.59999999999997px;line-height:14.6px;font-size:8px;color:#5e5e5e;white-space:nowrap">踢脚线</div><div style="position:absolute;left:218px;top:440.59999999999997px;line-height:14.6px;font-size:8px;color:#5e5e5e;white-space:nowrap">金属踢脚</div><div style="position:absolute;left:312px;top:440.59999999999997px;line-height:14.6px;font-size:8px;color:#5e5e5e;white-space:nowrap"><span style="color:#c2c2c2;margin-right:1.5px">X1:</span><span style="color:#5e5e5e">铝合金踢脚线</span></div><div style="position:absolute;left:418px;top:440.59999999999997px;line-height:14.6px;font-size:8px;color:#5e5e5e;white-space:nowrap"><span style="color:#bbb;position:relative;top:-1.6px;letter-spacing:0.6px">--</span></div><div style="position:absolute;left:463px;top:440.59999999999997px;line-height:14.6px;font-size:8px;color:#5e5e5e;white-space:nowrap"><span style="color:#bbb;position:relative;top:-1.6px;letter-spacing:0.6px">--</span></div><div style="position:absolute;left:508px;top:440.59999999999997px;line-height:14.6px;font-size:8px;color:#5e5e5e;white-space:nowrap">颜值固化</div><div style="position:absolute;left:554px;top:440.59999999999997px;line-height:14.6px;font-size:8px;color:#5e5e5e;white-space:nowrap">墙面</div><div style="position:absolute;left:613.5px;top:440.59999999999997px;line-height:14.6px;font-size:8px;color:#5e5e5e;white-space:nowrap">踢脚线</div><div style="position:absolute;left:673px;top:440.59999999999997px;line-height:14.6px;font-size:8px;color:#5e5e5e;white-space:nowrap">金属踢脚</div><div style="position:absolute;left:767px;top:440.59999999999997px;line-height:14.6px;font-size:8px;color:#5e5e5e;white-space:nowrap"><span style="color:#c2c2c2;margin-right:1.5px">X1:</span><span style="color:#5e5e5e">铝合金踢脚线</span></div><div style="position:absolute;left:874px;top:440.59999999999997px;line-height:14.6px;font-size:8px;color:#5e5e5e;white-space:nowrap"><span style="color:#bbb;position:relative;top:-1.6px;letter-spacing:0.6px">--</span></div><div style="position:absolute;left:920px;top:440.59999999999997px;line-height:14.6px;font-size:8px;color:#5e5e5e;white-space:nowrap"><span style="color:#bbb;position:relative;top:-1.6px;letter-spacing:0.6px">--</span></div><div style="position:absolute;left:966px;top:440.59999999999997px;line-height:14.6px;font-size:7.4px;color:#aaaaaa;white-space:nowrap">系统判断</div><div style="position:absolute;left:1016.5px;top:440.59999999999997px;line-height:14.6px;font-size:7.3px;color:#4670c8;white-space:nowrap"><span style="-webkit-text-stroke:0.15px #4670c8">编辑</span></div><div style="position:absolute;left:1038.5px;top:440.59999999999997px;line-height:14.6px;font-size:7.3px;color:#4670c8;white-space:nowrap"><span style="-webkit-text-stroke:0.15px #4670c8">不选</span></div><div style="position:absolute;left:99px;top:455.45px;line-height:14.6px;font-size:8px;color:#5e5e5e;white-space:nowrap"><span style="color:#bbb;position:relative;top:-1.6px;letter-spacing:0.6px">--</span></div><div style="position:absolute;left:158px;top:455.45px;line-height:14.6px;font-size:8px;color:#5e5e5e;white-space:nowrap"><span style="color:#bbb;position:relative;top:-1.6px;letter-spacing:0.6px">--</span></div><div style="position:absolute;left:218px;top:455.45px;line-height:14.6px;font-size:8px;color:#5e5e5e;white-space:nowrap"><span style="color:#bbb;position:relative;top:-1.6px;letter-spacing:0.6px">--</span></div><div style="position:absolute;left:312px;top:455.45px;line-height:14.6px;font-size:8px;color:#5e5e5e;white-space:nowrap"><span style="color:#bbb;position:relative;top:-1.6px;letter-spacing:0.6px">--</span></div><div style="position:absolute;left:418px;top:455.45px;line-height:14.6px;font-size:8px;color:#5e5e5e;white-space:nowrap"><span style="color:#bbb;position:relative;top:-1.6px;letter-spacing:0.6px">--</span></div><div style="position:absolute;left:463px;top:455.45px;line-height:14.6px;font-size:8px;color:#5e5e5e;white-space:nowrap"><span style="color:#bbb;position:relative;top:-1.6px;letter-spacing:0.6px">--</span></div><div style="position:absolute;left:508px;top:455.45px;line-height:14.6px;font-size:8px;color:#5e5e5e;white-space:nowrap"><span style="position:relative;top:-1.6px;letter-spacing:0.6px">--</span></div><div style="position:absolute;left:554px;top:455.45px;line-height:14.6px;font-size:8px;color:#5e5e5e;white-space:nowrap">顶面</div><div style="position:absolute;left:613.5px;top:455.45px;line-height:14.6px;font-size:8px;color:#5e5e5e;white-space:nowrap">窄边灯带</div><div style="position:absolute;left:673px;top:455.45px;line-height:14.6px;font-size:8px;color:#5e5e5e;white-space:nowrap">叠级吊顶|普通乳胶漆</div><div style="position:absolute;left:767px;top:455.45px;line-height:14.6px;font-size:8px;color:#5e5e5e;white-space:nowrap"><span style="color:#c2c2c2;margin-right:1.5px">X1:</span><span style="color:#5e5e5e">普通乳胶漆</span></div><div style="position:absolute;left:874px;top:455.45px;line-height:14.6px;font-size:8px;color:#5e5e5e;white-space:nowrap"><span style="color:#bbb;position:relative;top:-1.6px;letter-spacing:0.6px">--</span></div><div style="position:absolute;left:920px;top:455.45px;line-height:14.6px;font-size:8px;color:#5e5e5e;white-space:nowrap"><span style="color:#bbb;position:relative;top:-1.6px;letter-spacing:0.6px">--</span></div><div style="position:absolute;left:966px;top:454.05px;width:34px;height:12px;background:#feeaea;border-radius:2px"></div><div style="position:absolute;left:968px;top:455.45px;line-height:14.6px;font-size:7.5px;color:#c94848;white-space:nowrap"><span style="-webkit-text-stroke:0.15px #c94848">配置新增</span></div><div style="position:absolute;left:1016.5px;top:455.45px;line-height:14.6px;font-size:7.3px;color:#4670c8;white-space:nowrap"><span style="-webkit-text-stroke:0.15px #4670c8">编辑</span></div><div style="position:absolute;left:1038.5px;top:455.45px;line-height:14.6px;font-size:7.3px;color:#4670c8;white-space:nowrap"><span style="-webkit-text-stroke:0.15px #4670c8">删除</span></div><div style="position:absolute;left:99px;top:470.45px;line-height:14.6px;font-size:8px;color:#5e5e5e;white-space:nowrap">顶面</div><div style="position:absolute;left:158px;top:470.45px;line-height:14.6px;font-size:8px;color:#5e5e5e;white-space:nowrap">涂料原顶</div><div style="position:absolute;left:218px;top:470.45px;line-height:14.6px;font-size:8px;color:#5e5e5e;white-space:nowrap">普通乳胶漆-天棚</div><div style="position:absolute;left:312px;top:470.45px;line-height:14.6px;font-size:8px;color:#5e5e5e;white-space:nowrap"><span style="color:#c2c2c2;margin-right:1.5px">X1:</span><span style="color:#5e5e5e">普通乳胶漆</span></div><div style="position:absolute;left:418px;top:470.45px;line-height:14.6px;font-size:8px;color:#5e5e5e;white-space:nowrap">国产一线</div><div style="position:absolute;left:463px;top:470.45px;line-height:14.6px;font-size:8px;color:#5e5e5e;white-space:nowrap"><span style="color:#bbb;position:relative;top:-1.6px;letter-spacing:0.6px">--</span></div><div style="position:absolute;left:508px;top:470.45px;line-height:14.6px;font-size:8px;color:#5e5e5e;white-space:nowrap"><span style="color:#bbb;position:relative;top:-1.6px;letter-spacing:0.6px">--</span></div><div style="position:absolute;left:554px;top:470.45px;line-height:14.6px;font-size:8px;color:#5e5e5e;white-space:nowrap">顶面</div><div style="position:absolute;left:613.5px;top:470.45px;line-height:14.6px;font-size:8px;color:#5e5e5e;white-space:nowrap">涂料原顶</div><div style="position:absolute;left:673px;top:470.45px;line-height:14.6px;font-size:8px;color:#5e5e5e;white-space:nowrap">普通乳胶漆-天棚</div><div style="position:absolute;left:767px;top:470.45px;line-height:14.6px;font-size:8px;color:#5e5e5e;white-space:nowrap"><span style="color:#c2c2c2;margin-right:1.5px">X1:</span><span style="color:#5e5e5e">普通乳胶漆</span></div><div style="position:absolute;left:874px;top:470.45px;line-height:14.6px;font-size:8px;color:#5e5e5e;white-space:nowrap">国产一线</div><div style="position:absolute;left:920px;top:470.45px;line-height:14.6px;font-size:8px;color:#5e5e5e;white-space:nowrap"><span style="color:#bbb;position:relative;top:-1.6px;letter-spacing:0.6px">--</span></div><div style="position:absolute;left:966px;top:470.45px;line-height:14.6px;font-size:7.4px;color:#aaaaaa;white-space:nowrap">系统判断</div><div style="position:absolute;left:1016.5px;top:470.45px;line-height:14.6px;font-size:7.3px;color:#4670c8;white-space:nowrap"><span style="-webkit-text-stroke:0.15px #4670c8">编辑</span></div><div style="position:absolute;left:1038.5px;top:470.45px;line-height:14.6px;font-size:7.3px;color:#4670c8;white-space:nowrap"><span style="-webkit-text-stroke:0.15px #4670c8">不选</span></div><div style="position:absolute;left:99px;top:484.5px;line-height:14.6px;font-size:8px;color:#5e5e5e;white-space:nowrap">顶面</div><div style="position:absolute;left:158px;top:484.5px;line-height:14.6px;font-size:8px;color:#5e5e5e;white-space:nowrap">叠级吊顶</div><div style="position:absolute;left:218px;top:484.5px;line-height:14.6px;font-size:8px;color:#5e5e5e;white-space:nowrap">叠级吊顶|普通乳胶漆</div><div style="position:absolute;left:312px;top:484.5px;line-height:14.6px;font-size:8px;color:#5e5e5e;white-space:nowrap"><span style="color:#c2c2c2;margin-right:1.5px">X1:</span><span style="color:#5e5e5e">普通乳胶漆</span></div><div style="position:absolute;left:418px;top:484.5px;line-height:14.6px;font-size:8px;color:#5e5e5e;white-space:nowrap">国产一线</div><div style="position:absolute;left:463px;top:484.5px;line-height:14.6px;font-size:8px;color:#5e5e5e;white-space:nowrap"><span style="color:#bbb;position:relative;top:-1.6px;letter-spacing:0.6px">--</span></div><div style="position:absolute;left:508px;top:484.5px;line-height:14.6px;font-size:8px;color:#5e5e5e;white-space:nowrap"><span style="color:#bbb;position:relative;top:-1.6px;letter-spacing:0.6px">--</span></div><div style="position:absolute;left:554px;top:484.5px;line-height:14.6px;font-size:8px;color:#5e5e5e;white-space:nowrap">顶面</div><div style="position:absolute;left:613.5px;top:484.5px;line-height:14.6px;font-size:8px;color:#5e5e5e;white-space:nowrap">叠级吊顶</div><div style="position:absolute;left:673px;top:484.5px;line-height:14.6px;font-size:8px;color:#5e5e5e;white-space:nowrap">叠级吊顶|普通乳胶漆</div><div style="position:absolute;left:767px;top:484.5px;line-height:14.6px;font-size:8px;color:#5e5e5e;white-space:nowrap"><span style="color:#c2c2c2;margin-right:1.5px">X1:</span><span style="color:#5e5e5e">普通乳胶漆</span></div><div style="position:absolute;left:874px;top:484.5px;line-height:14.6px;font-size:8px;color:#5e5e5e;white-space:nowrap">国产一线</div><div style="position:absolute;left:920px;top:484.5px;line-height:14.6px;font-size:8px;color:#5e5e5e;white-space:nowrap"><span style="color:#bbb;position:relative;top:-1.6px;letter-spacing:0.6px">--</span></div><div style="position:absolute;left:966px;top:484.5px;line-height:14.6px;font-size:7.4px;color:#aaaaaa;white-space:nowrap">系统判断</div><div style="position:absolute;left:1016.5px;top:484.5px;line-height:14.6px;font-size:7.3px;color:#4670c8;white-space:nowrap"><span style="-webkit-text-stroke:0.15px #4670c8">编辑</span></div><div style="position:absolute;left:1038.5px;top:484.5px;line-height:14.6px;font-size:7.3px;color:#4670c8;white-space:nowrap"><span style="-webkit-text-stroke:0.15px #4670c8">不选</span></div><div style="position:absolute;left:99px;top:509.6499999999999px;line-height:14.6px;font-size:8px;color:#5e5e5e;white-space:nowrap">地面</div><div style="position:absolute;left:158px;top:509.6499999999999px;line-height:14.6px;font-size:8px;color:#5e5e5e;white-space:nowrap">木地板</div><div style="position:absolute;left:218px;top:501.94999999999993px;line-height:14.6px;font-size:8px;color:#5e5e5e;white-space:nowrap">木地板|(水泥砂浆找平<br>层+水泥基自流平)</div><div style="position:absolute;left:312px;top:509.6499999999999px;line-height:14.6px;font-size:8px;color:#5e5e5e;white-space:nowrap"><span style="color:#c2c2c2;margin-right:1.5px">X1:</span><span style="color:#f0b040">实木复合地板</span></div><div style="position:absolute;left:418px;top:509.6499999999999px;line-height:14.6px;font-size:8px;color:#5e5e5e;white-space:nowrap"><span style="color:#bbb;position:relative;top:-1.6px;letter-spacing:0.6px">--</span></div><div style="position:absolute;left:463px;top:509.6499999999999px;line-height:14.6px;font-size:8px;color:#5e5e5e;white-space:nowrap"><span style="color:#bbb;position:relative;top:-1.6px;letter-spacing:0.6px">--</span></div><div style="position:absolute;left:508px;top:509.6499999999999px;line-height:14.6px;font-size:8px;color:#5e5e5e;white-space:nowrap">颜值固化</div><div style="position:absolute;left:554px;top:509.6499999999999px;line-height:14.6px;font-size:8px;color:#5e5e5e;white-space:nowrap">地面</div><div style="position:absolute;left:613.5px;top:509.6499999999999px;line-height:14.6px;font-size:8px;color:#5e5e5e;white-space:nowrap">木地板</div><div style="position:absolute;left:673px;top:501.94999999999993px;line-height:14.6px;font-size:8px;color:#5e5e5e;white-space:nowrap">木地板|(水泥砂浆找平<br>层+水泥基自流平)</div><div style="position:absolute;left:767px;top:509.6499999999999px;line-height:14.6px;font-size:8px;color:#5e5e5e;white-space:nowrap"><span style="color:#c2c2c2;margin-right:1.5px">X1:</span><span style="color:#f0b040">强化复合地板</span></div><div style="position:absolute;left:874px;top:509.6499999999999px;line-height:14.6px;font-size:8px;color:#5e5e5e;white-space:nowrap"><span style="color:#bbb;position:relative;top:-1.6px;letter-spacing:0.6px">--</span></div><div style="position:absolute;left:920px;top:509.6499999999999px;line-height:14.6px;font-size:8px;color:#5e5e5e;white-space:nowrap"><span style="color:#bbb;position:relative;top:-1.6px;letter-spacing:0.6px">--</span></div><div style="position:absolute;left:966px;top:508.2499999999999px;width:34px;height:12px;background:#fdefe2;border-radius:2px"></div><div style="position:absolute;left:968px;top:509.6499999999999px;line-height:14.6px;font-size:7.5px;color:#c07a3c;white-space:nowrap"><span style="-webkit-text-stroke:0.15px #c07a3c">配置变化</span></div><div style="position:absolute;left:1016.5px;top:509.6499999999999px;line-height:14.6px;font-size:7.3px;color:#4670c8;white-space:nowrap"><span style="-webkit-text-stroke:0.15px #4670c8">编辑</span></div><div style="position:absolute;left:1038.5px;top:509.6499999999999px;line-height:14.6px;font-size:7.3px;color:#4670c8;white-space:nowrap"><span style="-webkit-text-stroke:0.15px #4670c8">不选</span></div><div class="t" style="left:41.0px;top:210.7px;font-size:8px;color:#444;font-weight:normal;">玄关</div><svg style="position:absolute;left:58.0px;top:216.2px" width="5" height="7" viewBox="0 0 5 7"><path d="M2.5 0 C4 0 5 1.1 5 2.6 C5 4.2 3.3 5.6 2.5 7 C1.7 5.6 0 4.2 0 2.6 C0 1.1 1 0 2.5 0 Z" fill="#555"/></svg><div style="position:absolute;left:17.5px;top:229.5px;width:68.5px;height:35.7px;border:1px dashed #ebebeb;box-sizing:border-box;border-radius:2px"></div><div style="position:absolute;left:47px;top:235.9px;width:10px;height:10px;background:#4a7de0;border-radius:50%"></div><div style="position:absolute;left:49.5px;top:240.4px;width:5px;height:1px;background:#fff"></div><div style="position:absolute;left:51.5px;top:238.4px;width:1px;height:5px;background:#fff"></div><div class="t" style="left:12px;width:80px;text-align:center;top:245.65px;font-size:8px;color:#666">上传图片</div><div class="t" style="left:12px;width:80px;text-align:center;top:268.4px;font-size:8px;color:#4a6fc6;word-spacing:1.5px">复制 重命名 更多</div><div style="position:absolute;left:17.5px;top:286.7px;width:68.5px;height:10.5px;border:1px solid #e9e9e9;box-sizing:border-box;border-radius:2px"></div><div class="t" style="left:30px;top:283.0px;font-size:8px;color:#c0c0c0">选择标签</div><svg style="position:absolute;left:71px;top:290.5px" width="6" height="4" viewBox="0 0 6 4"><path d="M0.5 0.5 L3 3 L5.5 0.5" fill="none" stroke="#bbb" stroke-width="0.7"/></svg><div class="t" style="left:37.0px;top:381.45px;font-size:8px;color:#444;font-weight:normal;">客餐厅</div><svg style="position:absolute;left:62.0px;top:386.95px" width="5" height="7" viewBox="0 0 5 7"><path d="M2.5 0 C4 0 5 1.1 5 2.6 C5 4.2 3.3 5.6 2.5 7 C1.7 5.6 0 4.2 0 2.6 C0 1.1 1 0 2.5 0 Z" fill="#555"/></svg><div style="position:absolute;left:17.5px;top:400.25px;width:68.5px;height:35.7px;border:1px dashed #ebebeb;box-sizing:border-box;border-radius:2px"></div><div style="position:absolute;left:47px;top:406.65px;width:10px;height:10px;background:#4a7de0;border-radius:50%"></div><div style="position:absolute;left:49.5px;top:411.15px;width:5px;height:1px;background:#fff"></div><div style="position:absolute;left:51.5px;top:409.15px;width:1px;height:5px;background:#fff"></div><div class="t" style="left:12px;width:80px;text-align:center;top:416.4px;font-size:8px;color:#666">上传图片</div><div class="t" style="left:12px;width:80px;text-align:center;top:439.15px;font-size:8px;color:#4a6fc6;word-spacing:1.5px">复制 重命名 更多</div><div style="position:absolute;left:17.5px;top:457.45px;width:68.5px;height:10.5px;border:1px solid #e9e9e9;box-sizing:border-box;border-radius:2px"></div><div class="t" style="left:30px;top:453.75px;font-size:8px;color:#c0c0c0">选择标签</div><svg style="position:absolute;left:71px;top:461.25px" width="6" height="4" viewBox="0 0 6 4"><path d="M0.5 0.5 L3 3 L5.5 0.5" fill="none" stroke="#bbb" stroke-width="0.7"/></svg><div class="t" style="left:40.5px;top:507px;font-size:8px;color:#444;font-weight:normal;">主卧</div><svg style="position:absolute;left:57.5px;top:513px" width="5" height="7" viewBox="0 0 5 7"><path d="M2.5 0 C4 0 5 1.1 5 2.6 C5 4.2 3.3 5.6 2.5 7 C1.7 5.6 0 4.2 0 2.6 C0 1.1 1 0 2.5 0 Z" fill="#555"/></svg><div style="position:absolute;left:25px;top:527.2px;width:40px;height:2px;background:#b8b8b8;filter:blur(1px)"></div><div style="position:absolute;left:66px;top:527.5px;width:10px;height:1.5px;background:#ddd;filter:blur(0.6px)"></div><div style="position:absolute;left:1062.5px;top:159.5px;width:3.3px;height:370px;background:#e3e4e7"></div><div style="position:absolute;left:1062.5px;top:159.5px;width:3.3px;height:49.5px;background:#c4c6ca"></div><div style="position:absolute;left:6px;top:536px;width:1066px;height:5px;background:linear-gradient(#f7f7f8,#f0f1f3 60%,#f7f7f8)"></div><div style="position:absolute;left:6px;top:541px;width:1066px;height:29px;background:#fff"></div><div style="position:absolute;left:387px;top:543.2px;width:54px;height:23.3px;border:1px solid #c3c8d2;border-radius:2px;box-sizing:border-box;background:#fff"></div><div class="t" style="left:387px;top:545px;width:54px;text-align:center;font-size:8.5px;color:#4a6fc6;font-weight:bold">上一步</div><div style="position:absolute;left:447.2px;top:543.2px;width:45.5px;height:23.3px;border:1px solid #c3c8d2;border-radius:2px;box-sizing:border-box;background:#fff"></div><div class="t" style="left:447.2px;top:545px;width:45.5px;text-align:center;font-size:8.5px;color:#4a6fc6;font-weight:bold">暂存</div><div style="position:absolute;left:499.5px;top:543px;width:63.2px;height:23.5px;background:#4f83e4;border-radius:2px"></div><div class="t" style="left:499.5px;top:545px;width:63.2px;text-align:center;font-size:8.5px;color:#fff;font-weight:bold">推送插件</div><div style="position:absolute;left:569.5px;top:543px;width:54px;height:23.5px;background:#4f83e4;border-radius:2px"></div><div class="t" style="left:569.5px;top:545px;width:54px;text-align:center;font-size:8.5px;color:#fff;font-weight:bold">下一步</div><div style="position:absolute;left:630px;top:543px;width:63px;height:23.5px;background:#4f83e4;border-radius:2px"></div><div class="t" style="left:630px;top:545px;width:63px;text-align:center;font-size:8.5px;color:#fff;font-weight:bold">保存封版</div></body></html>
